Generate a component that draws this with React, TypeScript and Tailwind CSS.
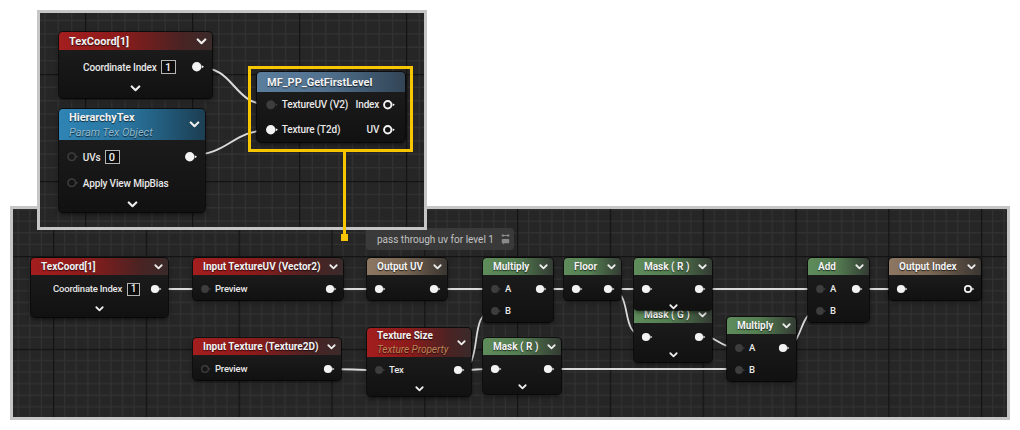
import React from "react";

type PinKind = "on" | "dim" | "ring" | "out";

const RED = "bg-[linear-gradient(90deg,#a41e1e_0%,#8c1b1b_40%,#4a2323_80%,#3a2a2a_100%)]";
const GREEN = "bg-[linear-gradient(90deg,#5f8c5b_0%,#557f52_45%,#3c4e3b_85%,#343b34_100%)]";
const TAN = "bg-[linear-gradient(90deg,#8d7762_0%,#7a6754_45%,#4b423a_85%,#3a3632_100%)]";
const BLUE = "bg-[linear-gradient(90deg,#2f84b4_0%,#2a76a1_45%,#1f4d68_85%,#1c3e52_100%)]";
const STEEL = "bg-[linear-gradient(90deg,#5b7e9e_0%,#52728f_45%,#3a5166_85%,#334555_100%)]";

function Pin({ kind, big = false }: { kind: PinKind; big?: boolean }) {
  const s = big ? 1.15 : 1;
  const white = "#f3f3f3";
  const dark = "#3d3d3d";
  return (
    <svg width={12 * s} height={10 * s} viewBox="0 0 12 10" className="shrink-0">
      {kind === "on" && (
        <>
          <circle cx="5" cy="5" r="4.1" fill={white} />
          <path d="M9.4 3.6 L11.3 5 L9.4 6.4Z" fill={white} />
        </>
      )}
      {kind === "dim" && (
        <>
          <circle cx="5" cy="5" r="3.9" fill={dark} />
          <path d="M9.2 3.7 L11 5 L9.2 6.3Z" fill={dark} />
        </>
      )}
      {kind === "ring" && (
        <>
          <circle cx="5" cy="5" r="3.3" fill="none" stroke={dark} strokeWidth="1.4" />
          <path d="M9 3.8 L10.6 5 L9 6.2Z" fill={dark} />
        </>
      )}
      {kind === "out" && (
        <>
          <circle cx="5" cy="5" r="3.2" fill="none" stroke={white} strokeWidth="1.7" />
          <path d="M9.3 3.6 L11.2 5 L9.3 6.4Z" fill={white} />
        </>
      )}
    </svg>
  );
}

function Chevron({ big = false }: { big?: boolean }) {
  return (
    <svg width={big ? 11 : 9} height={big ? 7 : 6} viewBox="0 0 10 6.5" className="shrink-0">
      <path
        d="M1.5 1.3 L5 4.8 L8.5 1.3"
        fill="none"
        stroke="#ececec"
        strokeWidth="2"
        strokeLinecap="round"
        strokeLinejoin="round"
      />
    </svg>
  );
}

function ValueBox({ v, big = false }: { v: string; big?: boolean }) {
  return (
    <span
      className={`flex items-center justify-center border border-[#b5b5b5] bg-[#0d0d0d] leading-none tracking-normal text-[#f0f0f0] ${
        big ? "h-[14px] w-[15px] text-[11px]" : "h-[13px] w-[13px] text-[10px]"
      }`}
    >
      {v}
    </span>
  );
}

type NodeProps = {
  x: number;
  y: number;
  w: number;
  head: string;
  headH: string;
  title: string;
  sub?: string;
  subColor?: string;
  chevron?: boolean;
  big?: boolean;
  children?: React.ReactNode;
};

function Node({ x, y, w, head, headH, title, sub, subColor, chevron = true, big = false, children }: NodeProps) {
  return (
    <div
      className="absolute flex flex-col overflow-hidden rounded-[4px] bg-[#121212] shadow-[0_2px_5px_rgba(0,0,0,0.6)] ring-1 ring-black/60"
      style={{ left: x, top: y, width: w }}
    >
      <div className={`${head} ${headH} flex items-center justify-between pl-[10px] pr-[5px]`}>
        <div className="flex flex-col leading-none [text-shadow:0_1px_1px_rgba(0,0,0,0.7)]">
          <span className={`font-bold text-[#f2f2f2] ${big ? "text-[11px]" : "text-[10px]"}`}>{title}</span>
          {sub && (
            <span className={`mt-[4px] italic ${subColor} ${big ? "text-[11px]" : "text-[10px]"}`}>{sub}</span>
          )}
        </div>
        {chevron && <Chevron big={big} />}
      </div>
      <div className="bg-[linear-gradient(180deg,#1b1b1b_0%,#111111_100%)]">{children}</div>
    </div>
  );
}

type RowProps = {
  inPin?: PinKind;
  label?: string;
  outLabel?: string;
  outPin?: PinKind;
  h?: string;
  pad?: string;
  big?: boolean;
  extra?: React.ReactNode;
};

function Row({ inPin, label, outLabel, outPin, h = "h-[22px]", pad = "pl-[7px] pr-[6px]", big = false, extra }: RowProps) {
  return (
    <div
      className={`flex items-center ${h} ${pad} ${
        big ? "text-[10px] tracking-[-0.15px]" : "text-[9.5px] tracking-[-0.2px]"
      } font-medium text-[#e8e8e8]`}
    >
      {inPin && <Pin kind={inPin} big={big} />}
      {label && <span className={inPin ? "ml-[3px]" : ""}>{label}</span>}
      {extra}
      <span className="flex-1" />
      {outLabel && <span className="mr-[3px]">{outLabel}</span>}
      {outPin && <Pin kind={outPin} big={big} />}
    </div>
  );
}

function Foot({ h, big = false }: { h: string; big?: boolean }) {
  return (
    <div className={`flex items-center justify-center ${h}`}>
      <Chevron big={big} />
    </div>
  );
}

function Grid({ id, major, ox, oy }: { id: string; major: number; ox: number; oy: number }) {
  const minor = major / 8;
  const idx = [1, 2, 3, 4, 5, 6, 7];
  return (
    <svg className="absolute inset-0 h-full w-full">
      <defs>
        <pattern id={id} width={major} height={major} patternUnits="userSpaceOnUse" x={ox} y={oy}>
          {idx.map((i) => (
            <g key={i}>
              <line x1={i * minor} y1={0} x2={i * minor} y2={major} stroke="#313131" strokeWidth="1.3" />
              <line x1={0} y1={i * minor} x2={major} y2={i * minor} stroke="#313131" strokeWidth="1.3" />
            </g>
          ))}
          <line x1={0.5} y1={0} x2={0.5} y2={major} stroke="#141414" strokeWidth="1.6" />
          <line x1={0} y1={0.5} x2={major} y2={0.5} stroke="#141414" strokeWidth="1.6" />
        </pattern>
      </defs>
      <rect width="100%" height="100%" fill="#262626" />
      <rect width="100%" height="100%" fill={`url(#${id})`} />
    </svg>
  );
}

const wire = (x1: number, y1: number, x2: number, y2: number, t = 25) =>
  `M${x1} ${y1} C${x1 + t} ${y1} ${x2 - t} ${y2} ${x2} ${y2}`;

const bottomWires = [
  wire(142, 80, 192, 80),
  wire(317, 80, 366, 80),
  wire(422, 80, 481, 80),
  wire(526, 80, 563, 80),
  wire(595, 80, 632, 80),
  wire(595, 80, 632, 127, 28),
  wire(685, 80, 806, 80),
  wire(842, 80, 888, 80),
  wire(685, 127, 725, 138, 22),
  wire(770, 138, 806, 102, 22),
  wire(315, 160, 366, 161),
  wire(445, 161, 481, 102, 28),
  wire(445, 161, 481, 160),
  wire(534, 160, 725, 160),
];

const topWires = [wire(157, 54, 231, 92, 40), wire(150, 142, 231, 117, 40)];

function CommentIcon() {
  return (
    <svg width="9" height="12" viewBox="0 0 9 12" className="shrink-0">
      <path d="M1 2.5 H8 M2.5 1 L1 2.5 L2.5 4 M6.5 1 L8 2.5 L6.5 4" fill="none" stroke="#8a8a8a" strokeWidth="1" />
      <rect x="0.8" y="6" width="7.4" height="4.2" rx="0.8" fill="#8a8a8a" />
      <path d="M2 10 L2 11.6 L3.6 10Z" fill="#8a8a8a" />
    </svg>
  );
}

function BottomCanvas() {
  return (
    <div className="relative ml-[10px] mt-[206px] h-[214px] w-[1000px] overflow-hidden border-[3px] border-[#c6c6c6] bg-[#262626]">
      <Grid id="gb" major={92.8} ox={40} oy={47} />
      <svg className="absolute inset-0 h-full w-full">
        {bottomWires.map((d, i) => (
          <path key={i} d={d} fill="none" stroke="#dadada" strokeWidth="1.8" />
        ))}
      </svg>

      {/* comment bubble */}
      <div className="absolute left-[353px] top-[19px] flex h-[22px] w-[148px] items-center rounded-[4px] bg-[#3c3c3c]/90 pl-[11px] pr-[4px] text-[10px] text-[#c2c2c2]">
        <span className="flex-1">pass through uv for level 1</span>
        <CommentIcon />
      </div>

      <Node x={18} y={49} w={137} head={RED} headH="h-[17px]" title="TexCoord[1]">
        <div className="h-[3px]" />
        <Row
          label="Coordinate Index"
          pad="pl-[22px] pr-[6px]"
          extra={
            <span className="ml-[5px]">
              <ValueBox v="1" />
            </span>
          }
          outPin="on"
        />
        <Foot h="h-[17px]" />
      </Node>

      <Node x={180} y={49} w={150} head={RED} headH="h-[17px]" title="Input TextureUV (Vector2)">
        <div className="h-[3px]" />
        <Row inPin="dim" label="Preview" outPin="on" />
      </Node>

      <Node x={180} y={129} w={148} head={RED} headH="h-[17px]" title="Input Texture (Texture2D)">
        <div className="h-[3px]" />
        <Row inPin="ring" label="Preview" outPin="on" />
      </Node>

      <Node x={354} y={49} w={80} head={TAN} headH="h-[17px]" title="Output UV">
        <div className="h-[3px]" />
        <Row inPin="on" outPin="on" />
      </Node>

      <Node
        x={354}
        y={119}
        w={104}
        head={RED}
        headH="h-[29px]"
        title="Texture Size"
        sub="Texture Property"
        subColor="text-[#c08658]"
      >
        <div className="h-[2px]" />
        <Row inPin="dim" label="Tex" outPin="on" />
        <Foot h="h-[15px]" />
      </Node>

      <Node x={470} y={49} w={70} head={GREEN} headH="h-[17px]" title="Multiply">
        <div className="h-[3px]" />
        <Row inPin="dim" label="A" outPin="on" />
        <Row inPin="dim" label="B" />
      </Node>

      <Node x={470} y={129} w={78} head={GREEN} headH="h-[17px]" title="Mask ( R )">
        <div className="h-[3px]" />
        <Row inPin="on" outPin="on" />
        <Foot h="h-[14px]" />
      </Node>

      <Node x={551} y={49} w={57} head={GREEN} headH="h-[17px]" title="Floor">
        <div className="h-[3px]" />
        <Row inPin="on" outPin="on" />
      </Node>

      <Node x={621} y={97} w={78} head={GREEN} headH="h-[17px]" title="Mask ( G )">
        <div className="h-[3px]" />
        <Row inPin="on" outPin="on" />
        <Foot h="h-[14px]" />
      </Node>

      <Node x={621} y={49} w={78} head={GREEN} headH="h-[17px]" title="Mask ( R )">
        <div className="h-[3px]" />
        <Row inPin="on" outPin="on" />
        <div className="flex h-[10px] items-end justify-center">
          <Chevron />
        </div>
      </Node>

      <Node x={714} y={108} w={69} head={GREEN} headH="h-[17px]" title="Multiply">
        <div className="h-[3px]" />
        <Row inPin="dim" label="A" outPin="on" />
        <Row inPin="dim" label="B" />
      </Node>

      <Node x={795} y={49} w={61} head={GREEN} headH="h-[17px]" title="Add">
        <div className="h-[3px]" />
        <Row inPin="dim" label="A" outPin="on" />
        <Row inPin="dim" label="B" />
      </Node>

      <Node x={876} y={49} w={92} head={TAN} headH="h-[17px]" title="Output Index">
        <div className="h-[3px]" />
        <Row inPin="on" outPin="out" />
      </Node>
    </div>
  );
}

function TopCanvas() {
  return (
    <div className="absolute left-[37px] top-[10px] h-[220px] w-[390px] overflow-hidden border-[3px] border-[#c6c6c6] bg-[#262626]">
      <Grid id="gt" major={107} ox={45} oy={61} />
      <svg className="absolute inset-0 h-full w-full">
        {topWires.map((d, i) => (
          <path key={i} d={d} fill="none" stroke="#dadada" strokeWidth="2" />
        ))}
      </svg>

      <Node x={19} y={19} w={153} head={RED} headH="h-[18px]" title="TexCoord[1]" big>
        <div className="h-[5px]" />
        <Row
          big
          h="h-[24px]"
          label="Coordinate Index"
          pad="pl-[24px] pr-[7px]"
          extra={
            <span className="ml-[4px]">
              <ValueBox v="1" big />
            </span>
          }
          outPin="on"
        />
        <Foot h="h-[19px]" big />
      </Node>

      <Node
        x={19}
        y={96}
        w={146}
        head={BLUE}
        headH="h-[31px]"
        title="HierarchyTex"
        sub="Param Tex Object"
        subColor="text-[#8fb9cf]"
        big
      >
        <div className="h-[4px]" />
        <Row
          big
          h="h-[26px]"
          inPin="ring"
          label="UVs"
          pad="pl-[7px] pr-[7px]"
          extra={
            <span className="ml-[4px]">
              <ValueBox v="0" big />
            </span>
          }
          outPin="on"
        />
        <Row big h="h-[26px]" inPin="ring" label="Apply View MipBias" pad="pl-[7px] pr-[7px]" />
        <Foot h="h-[16px]" big />
      </Node>

      <Node x={217} y={59} w={148} head={STEEL} headH="h-[20px]" title="MF_PP_GetFirstLevel" chevron={false} big>
        <Row big h="h-[25px]" pad="pl-[8px] pr-[9px]" inPin="dim" label="TextureUV (V2)" outLabel="Index" outPin="out" />
        <Row big h="h-[25px]" pad="pl-[8px] pr-[9px]" inPin="on" label="Texture (T2d)" outLabel="UV" outPin="out" />
      </Node>
    </div>
  );
}

export default function App() {
  return (
    <div className="relative h-[430px] w-[1020px] overflow-hidden bg-white font-[Roboto,'Noto_Sans',sans-serif]">
      <BottomCanvas />
      <TopCanvas />

      {/* highlight callout */}
      <div className="absolute left-[248px] top-[66px] h-[86px] w-[165px] border-[3px] border-[#f7c600]" />
      <div className="absolute left-[343px] top-[152px] h-[84px] w-[3px] bg-[#f7c600]" />
      <div className="absolute left-[341px] top-[234px] h-[7px] w-[7px] bg-[#f7c600]" />
    </div>
  );
}
